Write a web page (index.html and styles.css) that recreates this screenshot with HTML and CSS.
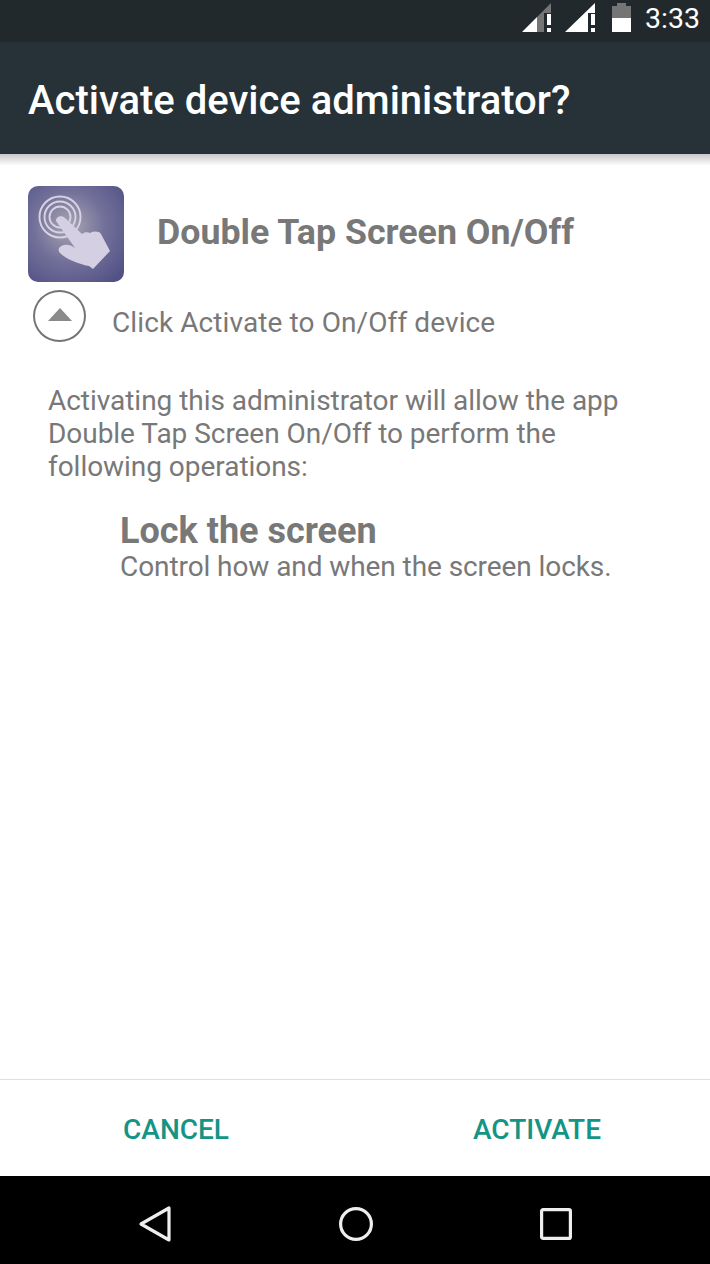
FILE: index.html
```html
<!DOCTYPE html>
<html lang="en">
<head>
    <meta charset="UTF-8">
    <meta name="viewport" content="width=device-width, initial-scale=1.0">
    <title>Activate device administrator?</title>
    <link rel="stylesheet" href="styles.css">
</head>
<body>
    <div class="status-bar">
        <svg class="signal" width="30" height="29" viewBox="0 0 30 29">
            <path d="M15 14 L29 0 V10 H22 V29 H15 Z" fill="#757575"/>
            <path d="M0 29 L15 14 V29 Z" fill="#fff"/>
            <rect x="25" y="11" width="4" height="11" fill="#fff"/>
            <rect x="25" y="25" width="4" height="4" fill="#fff"/>
        </svg>
        <svg class="signal" width="30" height="29" viewBox="0 0 30 29">
            <path d="M0 29 L30 0 V10 H23 V29 Z" fill="#fff"/>
            <rect x="26" y="11" width="4" height="11" fill="#fff"/>
            <rect x="26" y="25" width="4" height="4" fill="#fff"/>
        </svg>
        <svg class="battery" width="19" height="29" viewBox="0 0 19 29">
            <path d="M5 0 H14 V3 H19 V15 H0 V3 H5 Z" fill="#757575"/>
            <rect y="15" width="19" height="14" fill="#fff"/>
        </svg>
        <span class="clock">3:33</span>
    </div>

    <div class="title-bar">
        <h1>Activate device administrator?</h1>
    </div>

    <div class="content">
        <div class="app-row">
            <div class="app-icon">
                <svg width="96" height="96" viewBox="0 0 96 96">
                    <g fill="none" stroke="#d8d3e4" stroke-width="1.9">
                        <circle cx="32" cy="31" r="20.5"/>
                        <circle cx="32" cy="31" r="15.5"/>
                        <circle cx="32" cy="31" r="10.5"/>
                    </g>
                    <path d="M28 35 C28 30 34 29 37 32 L54 48 C56 46 60 46 62 47 C66 45 71 45 73 48 L82 65 L65 83 L61 80 C50 78 38 73 32 67 C29 64 31 60 36 59 C41 58 44 60 47 62 Z" fill="#d4cfe2"/>
                </svg>
            </div>
            <span class="app-name">Double Tap Screen On/Off</span>
        </div>

        <div class="hint-row">
            <span class="hint-icon"><span class="hint-arrow"></span></span>
            <span class="hint-text">Click Activate to On/Off device</span>
        </div>

        <p class="warning">Activating this administrator will allow the app Double Tap Screen On/Off to perform the following operations:</p>

        <div class="policy">
            <div class="policy-name">Lock the screen</div>
            <div class="policy-desc">Control how and when the screen locks.</div>
        </div>
    </div>

    <div class="actions">
        <button type="button" class="btn">CANCEL</button>
        <button type="button" class="btn">ACTIVATE</button>
    </div>

    <div class="nav-bar">
        <svg width="34" height="38" viewBox="0 0 34 38">
            <path d="M31 3 V35 L3 19 Z" fill="none" stroke="#eee" stroke-width="3.2" stroke-linejoin="round"/>
        </svg>
        <svg width="34" height="34" viewBox="0 0 34 34">
            <circle cx="17" cy="17" r="15.4" fill="none" stroke="#eee" stroke-width="3.2"/>
        </svg>
        <svg width="32" height="32" viewBox="0 0 32 32">
            <rect x="1.6" y="1.6" width="28.8" height="28.8" rx="1.5" fill="none" stroke="#eee" stroke-width="3.2"/>
        </svg>
    </div>
</body>
</html>
```

FILE: styles.css
```css
* { margin: 0; padding: 0; box-sizing: border-box; }
body {
    font-family: Roboto, "Liberation Sans", sans-serif;
    background: #fff;
    width: 710px; height: 1264px;
    display: flex; flex-direction: column;
    overflow: hidden;
}

.status-bar {
    height: 42px; background: #21292d;
    display: flex; align-items: flex-start; justify-content: flex-end;
    padding: 3px 10px 0 0;
}
.status-bar .signal { margin-right: 13px; }
.status-bar .battery { margin: 0 14px 0 4px; }
.status-bar .clock { font-size: 28.5px; line-height: 31px; color: #fff; }

.title-bar {
    height: 112px; background: #263238;
    display: flex; align-items: center;
    padding: 4px 28px 0;
    position: relative;
}
.title-bar::after {
    content: ''; position: absolute; top: 100%; left: 0; width: 100%; height: 12px;
    background: linear-gradient(rgba(0,0,0,0.22), rgba(0,0,0,0));
}
.title-bar h1 { font-size: 40px; font-weight: 500; color: #fff; }

.content { flex: 1; padding: 32px 28px 0; color: #787878; }

.app-row { display: flex; align-items: center; }
.app-icon {
    width: 96px; height: 96px; border-radius: 10px;
    background: radial-gradient(circle at 43% 42%, #aaa6b2 0%, #73719a 45%, #4a4a80 100%);
}
.app-icon svg { display: block; }
.app-name { font-size: 35.75px; font-weight: 700; margin-left: 33px; margin-bottom: 4px; }

.hint-row { display: flex; align-items: center; margin-top: 8px; padding-left: 5px; }
.hint-icon {
    width: 53px; height: 52px; border: 2.5px solid #757575; border-radius: 50%;
    display: flex; align-items: center; justify-content: center;
}
.hint-arrow {
    width: 0; height: 0;
    border-left: 12px solid transparent; border-right: 12px solid transparent;
    border-bottom: 13px solid #8a8a8a;
    margin-bottom: 3px;
}
.hint-text { font-size: 28px; letter-spacing: 0.1px; margin-left: 26px; padding-top: 12px; }

.warning { font-size: 28px; letter-spacing: -0.04px; line-height: 33px; margin: 42px 40px 0 20px; }

.policy { margin: 30px 0 0 92px; }
.policy-name { font-size: 36px; font-weight: 700; line-height: 37px; }
.policy-desc { font-size: 28px; letter-spacing: -0.08px; line-height: 33px; }

.actions {
    height: 97px; border-top: 1px solid #e0e0e0;
    display: grid; grid-template-columns: 352px 346px; column-gap: 12px;
    flex-shrink: 0;
}
.btn {
    background: none; border: none; padding-top: 2px;
    font-family: inherit; font-size: 28px; font-weight: 500; color: #149484;
}

.nav-bar {
    height: 88px; background: #000; flex-shrink: 0;
    display: flex; align-items: center; justify-content: space-between;
    padding: 8px 138px 0 138px;
}
```
